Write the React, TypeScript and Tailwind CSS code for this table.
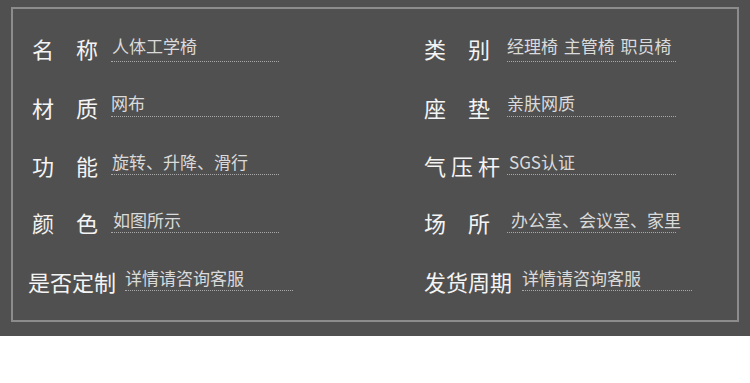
import React from "react";

type Cell = {
  label: string[];
  value: string;
  labelW: string; // full label slot width
  spanW: string; // width the characters are spread across
  valueW: string;
  valueClass?: string;
};

type Row = {
  left: Cell;
  right: Cell;
  rowClass: string;
  leftPad: string;
  pb: string;
  mb: string;
};

const ROWS: Row[] = [
  {
    left: { label: ["名", "称"], value: "人体工学椅", labelW: "w-[79px]", spanW: "w-[66px]", valueW: "w-[168px]", valueClass: "pl-[1px]" },
    right: { label: ["类", "别"], value: "经理椅 主管椅 职员椅", labelW: "w-[83px]", spanW: "w-[66px]", valueW: "w-[169px]", valueClass: "[word-spacing:2px]" },
    rowClass: "mt-[23px]",
    leftPad: "pl-[19px]",
    pb: "pb-[4px]",
    mb: "mb-[1px]",
  },
  {
    left: { label: ["材", "质"], value: "网布", labelW: "w-[79px]", spanW: "w-[66px]", valueW: "w-[168px]" },
    right: { label: ["座", "垫"], value: "亲肤网质", labelW: "w-[83px]", spanW: "w-[66px]", valueW: "w-[169px]" },
    rowClass: "mt-[25px]",
    leftPad: "pl-[19px]",
    pb: "pb-[2px]",
    mb: "-mb-[3px]",
  },
  {
    left: { label: ["功", "能"], value: "旋转、升降、滑行", labelW: "w-[79px]", spanW: "w-[66px]", valueW: "w-[168px]", valueClass: "pl-[1px]" },
    right: { label: ["气", "压", "杆"], value: "SGS认证", labelW: "w-[83px]", spanW: "w-[76px]", valueW: "w-[169px]", valueClass: "pl-[2px]" },
    rowClass: "mt-[28px]",
    leftPad: "pl-[19px]",
    pb: "pb-[1px]",
    mb: "-mb-[3px]",
  },
  {
    left: { label: ["颜", "色"], value: "如图所示", labelW: "w-[79px]", spanW: "w-[66px]", valueW: "w-[168px]", valueClass: "pl-[2px]" },
    right: { label: ["场", "所"], value: "办公室、会议室、家里", labelW: "w-[83px]", spanW: "w-[66px]", valueW: "w-[169px]", valueClass: "pl-[4px]" },
    rowClass: "mt-[28px]",
    leftPad: "pl-[19px]",
    pb: "pb-[1px]",
    mb: "-mb-[2px]",
  },
  {
    left: { label: ["是否定制"], value: "详情请咨询客服", labelW: "w-[97px]", spanW: "w-[90px]", valueW: "w-[168px]" },
    right: { label: ["发货周期"], value: "详情请咨询客服", labelW: "w-[98px]", spanW: "w-[90px]", valueW: "w-[170px]" },
    rowClass: "mt-[28px]",
    leftPad: "pl-[15px]",
    pb: "pb-[1px]",
    mb: "-mb-[3px]",
  },
];

function Field({ cell, pb, mb }: { cell: Cell; pb: string; mb: string }) {
  return (
    <div className="flex items-end">
      <div className={`${cell.labelW} shrink-0 ${mb}`}>
        <div className={`${cell.spanW} flex justify-between text-[22px] leading-[26px] text-[#f4f4f4]`}>
          {cell.label.map((c) => (
            <span key={c}>{c}</span>
          ))}
        </div>
      </div>
      <div
        className={`${cell.valueW} shrink-0 whitespace-nowrap border-b border-dotted border-[#a8a8a8] text-[17px] leading-[22px] text-[#dadada] ${pb} ${cell.valueClass ?? ""}`}
      >
        {cell.value}
      </div>
    </div>
  );
}

export default function App() {
  return (
    <div className="w-[750px] h-[383px] bg-white font-['Noto_Sans_CJK_SC','Noto_Sans',sans-serif]">
      <div className="h-[336px] bg-[#505050] pt-[7px] pl-[11px] pr-[11px]">
        <div className="h-[315px] border-2 border-[#8c8c8c] flex flex-col">
          {ROWS.map((row, i) => (
            <div key={i} className={`flex h-[30px] items-end ${row.rowClass}`}>
              <div className={`w-[411px] shrink-0 ${row.leftPad}`}>
                <Field cell={row.left} pb={row.pb} mb={row.mb} />
              </div>
              <div>
                <Field cell={row.right} pb={row.pb} mb={row.mb} />
              </div>
            </div>
          ))}
        </div>
      </div>
    </div>
  );
}
